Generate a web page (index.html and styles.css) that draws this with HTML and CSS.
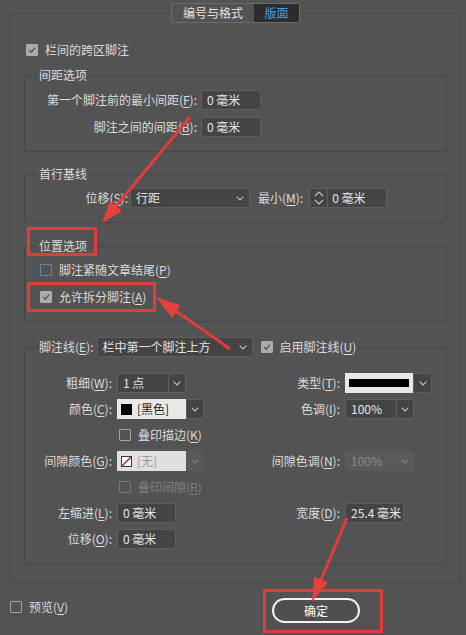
FILE: index.html
```html
<!DOCTYPE html>
<html lang="zh-CN">
<head>
<meta charset="utf-8">
<title>脚注选项</title>
<link rel="stylesheet" href="styles.css">
</head>
<body>
<fieldset class="outer">
  <legend class="tabs-legend">
    <div class="tabs"><span class="tab">编号与格式</span><span class="tab active">版面</span></div>
  </legend>

  <div class="check top-check"><span class="cb checked"><svg viewBox="0 0 12 12"><polyline points="2.5,6 5,8.6 9.6,3.2"/></svg></span><span>栏间的跨区脚注</span></div>

  <fieldset class="group g-spacing">
    <legend>间距选项</legend>
    <div class="grid-spacing">
      <span class="lbl">第一个脚注前的最小间距(<u>F</u>):</span><span class="field">0 毫米</span>
      <span class="lbl">脚注之间的间距(<u>B</u>):</span><span class="field">0 毫米</span>
    </div>
  </fieldset>

  <fieldset class="group g-baseline">
    <legend>首行基线</legend>
    <div class="baseline-row">
      <span class="lbl bl-lbl">位移(<u>S</u>):</span>
      <span class="combo plain w120"><span class="combo-val">行距</span><span class="chev-wrap"><svg class="chev" viewBox="0 0 8 5"><polyline points="0.6,0.6 4,4 7.4,0.6"/></svg></span></span>
      <span class="lbl min-lbl">最小(<u>M</u>):</span>
      <span class="stepper"><span class="spin"><svg viewBox="0 0 10 16"><polyline points="1,6 5,2 9,6"/><polyline points="1,10 5,14 9,10"/></svg></span><span class="combo-val">0 毫米</span></span>
    </div>
  </fieldset>

  <fieldset class="group g-position">
    <legend>位置选项</legend>
    <div class="pos-rows">
      <div class="check"><span class="cb focus"></span><span>脚注紧随文章结尾(<u>P</u>)</span></div>
      <div class="check"><span class="cb checked"><svg viewBox="0 0 12 12"><polyline points="2.5,6 5,8.6 9.6,3.2"/></svg></span><span>允许拆分脚注(<u>A</u>)</span></div>
    </div>
  </fieldset>

  <fieldset class="group g-rule">
    <legend>
      <div class="rule-legend">
        <span>脚注线(<u>E</u>):</span>
        <span class="combo plain w156"><span class="combo-val">栏中第一个脚注上方</span><span class="chev-wrap"><svg class="chev" viewBox="0 0 8 5"><polyline points="0.6,0.6 4,4 7.4,0.6"/></svg></span></span>
        <div class="check rule-check"><span class="cb checked"><svg viewBox="0 0 12 12"><polyline points="2.5,6 5,8.6 9.6,3.2"/></svg></span><span>启用脚注线(<u>U</u>)</span></div>
      </div>
    </legend>
    <div class="fn-grid">
      <span class="lbl">粗细(<u>W</u>):</span>
      <span class="combo w69"><span class="combo-val">1 点</span><span class="combo-btn"><svg class="chev" viewBox="0 0 8 5"><polyline points="0.6,0.6 4,4 7.4,0.6"/></svg></span></span>
      <span class="lbl">类型(<u>T</u>):</span>
      <span class="swatch-combo"><span class="swatch-val type-val"><span class="type-bar"></span></span><span class="swatch-btn"><svg class="chev" viewBox="0 0 8 5"><polyline points="0.6,0.6 4,4 7.4,0.6"/></svg></span></span>

      <span class="lbl">颜色(<u>C</u>):</span>
      <span class="swatch-combo"><span class="swatch-val"><span class="sw black"></span><span>[黑色]</span></span><span class="swatch-btn"><svg class="chev" viewBox="0 0 8 5"><polyline points="0.6,0.6 4,4 7.4,0.6"/></svg></span></span>
      <span class="lbl">色调(<u>I</u>):</span>
      <span class="combo w69"><span class="combo-val">100%</span><span class="combo-btn"><svg class="chev" viewBox="0 0 8 5"><polyline points="0.6,0.6 4,4 7.4,0.6"/></svg></span></span>

      <div class="check span-check"><span class="cb"></span><span>叠印描边(<u>K</u>)</span></div>

      <span class="lbl">间隙颜色(<u>G</u>):</span>
      <span class="swatch-combo disabled"><span class="swatch-val"><span class="sw none"><svg viewBox="0 0 11 11"><line x1="0" y1="11" x2="11" y2="0"/></svg></span><span>[无]</span></span><span class="swatch-btn"><svg class="chev" viewBox="0 0 8 5"><polyline points="0.6,0.6 4,4 7.4,0.6"/></svg></span></span>
      <span class="lbl">间隙色调(<u>N</u>):</span>
      <span class="combo w69 disabled"><span class="combo-val">100%</span><span class="combo-btn"><svg class="chev" viewBox="0 0 8 5"><polyline points="0.6,0.6 4,4 7.4,0.6"/></svg></span></span>

      <div class="check span-check disabled"><span class="cb"></span><span>叠印间隙(<u>R</u>)</span></div>

      <span class="lbl">左缩进(<u>L</u>):</span>
      <span class="field w59">0 毫米</span>
      <span class="lbl">宽度(<u>D</u>):</span>
      <span class="field w59">25.4 毫米</span>

      <span class="lbl">位移(<u>O</u>):</span>
      <span class="field w59">0 毫米</span>
    </div>
  </fieldset>
</fieldset>

<div class="footer">
  <div class="check"><span class="cb"></span><span>预览(<u>V</u>)</span></div>
  <div class="btn">确定</div>
</div>

<svg class="annot" viewBox="0 0 466 635" width="466" height="635">
  <g fill="none" stroke="#e23b3b" stroke-width="3">
    <rect x="28.5" y="228.5" width="67" height="26"/>
    <rect x="28.5" y="283.5" width="126" height="27"/>
    <rect x="264.5" y="590.5" width="117" height="41"/>
    <line x1="190" y1="117" x2="116" y2="206"/>
    <line x1="230" y1="349" x2="176" y2="311"/>
    <line x1="347" y1="518" x2="321" y2="580"/>
  </g>
  <g fill="#e8403e">
    <polygon points="102,223 122,211 110,201"/>
    <polygon points="156,297 180,305 172,318"/>
    <polygon points="312,602 328,582 314,577"/>
  </g>
</svg>
</body>
</html>
```

FILE: styles.css
```css
* { box-sizing: border-box; }
html, body { margin: 0; padding: 0; }
body {
  background: #535353;
  color: #dcdcdc;
  font-family: "Noto Sans CJK SC", "Noto Sans", sans-serif;
  font-size: 12px;
  line-height: 18px;
  width: 466px;
  height: 635px;
  overflow: hidden;
  position: relative;
}
u { text-decoration: underline; text-underline-offset: 2px; text-decoration-thickness: 1px; }
svg { display: block; }

fieldset { margin: 0; min-width: 0; }
legend { padding: 0 2px; line-height: 18px; }

.outer {
  margin: 3px 5px 0 9px;
  border: 1px solid #474747;
  border-radius: 3px;
  padding: 18px 13px 18px 14px;
}
.tabs-legend { margin: 0 auto; padding: 0; }
.tabs {
  display: flex;
  height: 20px;
  border: 1px solid #6b6b6b;
  border-radius: 2px;
}
.tab { width: 82px; text-align: center; line-height: 18px; color: #e4e4e4; }
.tab.active { width: 45px; background: #2c2c2c; color: #4c9ce4; }

.group {
  border: 1px solid #454545;
  border-radius: 3px;
  padding: 6px 12px 14px 12px;
}
.g-spacing { margin-top: 7px; }
.g-baseline { margin-top: 13px; padding-top: 5px; }
.g-position { margin-top: 14px; padding-bottom: 15px; }
.g-rule { margin-top: 15px; padding-top: 16px; }

/* checkbox */
.check { display: flex; align-items: center; gap: 7px; height: 18px; white-space: nowrap; }
.cb {
  width: 12px; height: 12px; flex: none;
  border: 1px solid #a2a2a2; border-radius: 1px;
}
.cb.checked { background: #ababab; border-color: #ababab; }
.cb.checked svg { width: 10px; height: 10px; }
.cb.checked polyline { fill: none; stroke: #5a5a5a; stroke-width: 1.7; }
.cb.focus { border-color: #6384b8; }
.top-check { margin-left: 2px; }

/* labels & fields */
.lbl { line-height: 20px; white-space: nowrap; }
.field {
  height: 20px;
  border: 1px solid #5e5e5e;
  background: #444444;
  border-radius: 2px;
  padding-left: 5px;
  line-height: 18px;
  color: #e4e4e4;
  white-space: nowrap;
  overflow: hidden;
}
.w59 { width: 59px; }

.grid-spacing {
  display: grid;
  grid-template-columns: 160px 60px;
  column-gap: 4px;
  row-gap: 7px;
}
.grid-spacing .lbl { justify-self: end; }

/* combos */
.combo {
  display: flex;
  height: 20px;
  border: 1px solid #5e5e5e;
  background: #444444;
  border-radius: 2px;
  color: #e4e4e4;
}
.combo-val { flex: 1; padding-left: 5px; line-height: 18px; white-space: nowrap; overflow: hidden; }
.combo-btn {
  width: 17px; flex: none;
  border-left: 1px solid #5e5e5e;
  display: flex; align-items: center; justify-content: center;
}
.chev-wrap { width: 18px; flex: none; display: flex; align-items: center; justify-content: center; }
.chev { width: 8px; height: 5px; }
.chev polyline { fill: none; stroke: #c4c4c4; stroke-width: 1.1; }
.w120 { width: 120px; }
.w156 { width: 156px; }
.w69 { width: 69px; }
.combo.disabled { background: #5a5a5a; border-color: #5a5a5a; color: #8a8a8a; }
.combo.disabled .combo-btn { border-left-color: #5a5a5a; }
.combo.disabled .chev polyline { stroke: #858585; }

.swatch-combo { display: flex; height: 20px; width: 87px; }
.swatch-val {
  width: 69px; flex: none;
  background: #e8e8e8; color: #1e1e1e;
  display: flex; align-items: center; gap: 5px;
  padding-left: 4px;
  white-space: nowrap;
}
.swatch-btn {
  flex: 1;
  border: 1px solid #5e5e5e; border-radius: 0 2px 2px 0;
  background: #444444;
  display: flex; align-items: center; justify-content: center;
}
.sw { width: 11px; height: 11px; flex: none; }
.sw.black { background: #000; }
.sw.none { background: #fff; border: 1px solid #3a3a3a; overflow: hidden; }
.sw.none svg { width: 9px; height: 9px; }
.sw.none line { stroke: #b01c1c; stroke-width: 1.6; }
.swatch-combo.disabled .swatch-val { background: #e0e0e0; color: #9c9c9c; }
.swatch-combo.disabled .swatch-btn { background: #595959; border-color: #595959; }
.swatch-combo.disabled .chev polyline { stroke: #838383; }
.type-val { width: 68px; padding: 0 4px; }
.type-bar { flex: 1; height: 8px; background: #000; }

/* baseline row */
.baseline-row { display: flex; align-items: center; height: 20px; }
.bl-lbl { width: 91px; text-align: right; margin-right: 2px; }
.min-lbl { margin-left: 8px; margin-right: 6px; }
.stepper {
  display: flex; width: 78px; height: 20px;
  border: 1px solid #5e5e5e; background: #444444; border-radius: 2px; color: #e4e4e4;
}
.stepper .spin {
  width: 18px; flex: none; border-right: 1px solid #5e5e5e;
  display: flex; align-items: center; justify-content: center;
}
.stepper .spin svg { width: 10px; height: 16px; }
.stepper .spin polyline { fill: none; stroke: #c4c4c4; stroke-width: 1.1; }
.stepper .combo-val { padding-left: 4px; }

/* position rows */
.pos-rows { display: flex; flex-direction: column; gap: 9px; padding-left: 3px; }

/* footnote rule */
.rule-legend { display: flex; align-items: center; height: 20px; }
.rule-legend .combo { margin-left: 3px; }
.rule-check { margin-left: 8px; }
.fn-grid {
  display: grid;
  grid-template-columns: 80px 101px 127px 89px;
  grid-auto-rows: 20px;
  row-gap: 6px;
  align-items: center;
}
.fn-grid .lbl { justify-self: end; padding-right: 5px; }
.fn-grid > .combo, .fn-grid > .swatch-combo, .fn-grid > .field { justify-self: start; }
.span-check { grid-column: 2 / -1; margin-left: 2px; height: 20px; }
.check.disabled { color: #808080; }
.check.disabled .cb { border-color: #767676; }

/* footer */
.footer {
  display: grid;
  grid-template-columns: 262px 88px;
  padding: 15px 0 0 10px;
  align-items: start;
}
.btn {
  height: 25px;
  border: 2px solid #f2f2f2;
  border-radius: 13px;
  background: #4f4f4f;
  color: #ffffff;
  text-align: center;
  line-height: 21px;
}

.annot { position: absolute; left: 0; top: 0; pointer-events: none; }
```
